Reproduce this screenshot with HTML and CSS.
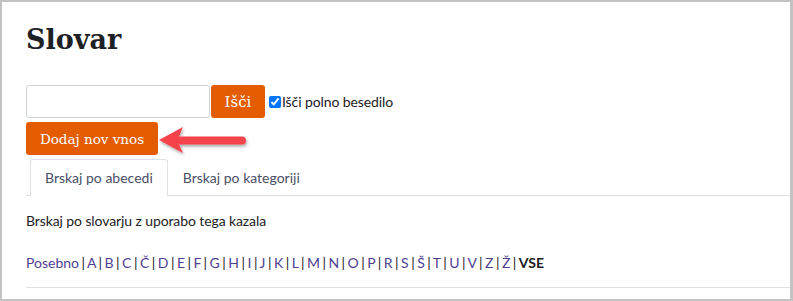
FILE: index.html
```html
<!DOCTYPE html>
<html lang="sl">
<head>
    <meta charset="UTF-8">
    <title>Slovar</title>
    <link rel="stylesheet" href="styles.css">
</head>
<body>
    <div class="frame">
        <h1>Slovar</h1>
        <form class="search-row" onsubmit="return false">
            <input type="text" class="search-input">
            <button type="submit" class="btn btn-search">Išči</button>
            <label class="fulltext"><input type="checkbox" checked>Išči polno besedilo</label>
        </form>
        <div class="add-row">
            <button type="button" class="btn btn-add">Dodaj nov vnos</button>
            <svg class="arrow" width="96" height="36" viewBox="0 0 96 36">
                <defs>
                    <filter id="sh" x="-20%" y="-40%" width="140%" height="180%">
                        <feDropShadow dx="1" dy="2" stdDeviation="1.5" flood-color="#000" flood-opacity="0.35"/>
                    </filter>
                </defs>
                <g filter="url(#sh)" fill="#f6434c">
                    <path d="M1 16 L25 3 L21 12.5 L84 12.5 A4 4 0 0 1 84 20.5 L21 20.5 L25 29 Z"/>
                </g>
            </svg>
        </div>
        <ul class="tabs">
            <li class="active">Brskaj po abecedi</li>
            <li>Brskaj po kategoriji</li>
        </ul>
        <p class="intro">Brskaj po slovarju z uporabo tega kazala</p>
        <div class="letters">
            <a href="#">Posebno</a> | <a href="#">A</a> | <a href="#">B</a> | <a href="#">C</a> | <a href="#">Č</a> | <a href="#">D</a> | <a href="#">E</a> | <a href="#">F</a> | <a href="#">G</a> | <a href="#">H</a> | <a href="#">I</a> | <a href="#">J</a> | <a href="#">K</a> | <a href="#">L</a> | <a href="#">M</a> | <a href="#">N</a> | <a href="#">O</a> | <a href="#">P</a> | <a href="#">R</a> | <a href="#">S</a> | <a href="#">Š</a> | <a href="#">T</a> | <a href="#">U</a> | <a href="#">V</a> | <a href="#">Z</a> | <a href="#">Ž</a> | <b>VSE</b>
        </div>
        <div class="rule"></div>
    </div>
</body>
</html>
```

FILE: styles.css
```css
body {
    margin: 0;
    font-family: "Source Sans Pro", Lato, "Noto Sans", sans-serif;
    font-size: 14px;
    color: #1d2125;
}
.frame {
    width: 793px;
    height: 301px;
    box-sizing: border-box;
    border: 2px solid #c3c3c3;
    border-right-width: 3px;
    padding: 0 0 0 24px;
    background: #fff;
    overflow: hidden;
}
h1 {
    margin: 18px 0 0;
    font-family: "DejaVu Serif", serif;
    font-weight: bold;
    font-size: 27px;
    line-height: 40px;
    color: #1d2125;
}
.search-row {
    display: flex;
    align-items: center;
    margin-top: 25px;
    height: 33px;
}
.search-input {
    width: 184px;
    height: 33px;
    box-sizing: border-box;
    border: 1px solid #ced4da;
    border-radius: 3px;
    margin: 0 1px 0 0;
}
.btn {
    height: 33px;
    border: none;
    border-radius: 3px;
    background: #e35d00;
    color: #fff;
    font-family: "DejaVu Serif", serif;
    font-size: 14px;
    padding: 0 12px;
    cursor: pointer;
}
.btn-search {
    width: 54px;
    padding: 0;
    font-size: 15px;
}
.fulltext {
    display: flex;
    align-items: center;
    margin-left: 4px;
    font-size: 14px;
    letter-spacing: -0.1px;
}
.fulltext input {
    margin: 0 1px 0 0;
    width: 12px;
    height: 12px;
}
.add-row {
    display: flex;
    align-items: center;
    margin-top: 4px;
    height: 33px;
}
.btn-add {
    width: 132px;
    padding: 0;
    font-size: 13.5px;
}
.arrow {
    margin-left: 0;
    margin-top: 7px;
}
.tabs {
    display: flex;
    list-style: none;
    margin: 4px 0 0;
    padding: 0 0 0 4px;
    border-bottom: 1px solid #dee2e6;
    height: 36px;
}
.tabs li {
    padding: 0 14px;
    line-height: 35px;
    color: #4a4e66;
    border: 1px solid transparent;
    border-bottom: none;
    border-radius: 3px 3px 0 0;
}
.tabs li.active {
    border-color: #dee2e6;
    background: #fff;
    height: 36px;
}
.intro {
    margin: 16px 0 0;
    line-height: 18px;
    letter-spacing: -0.1px;
}
.letters {
    margin-top: 24px;
    line-height: 18px;
    color: #1d2125;
    word-spacing: -1.1px;
}
.letters a {
    color: #4f3f93;
    text-decoration: none;
}
.letters b {
    font-weight: bold;
}
.rule {
    margin-top: 15px;
    border-top: 1px solid #dee2e6;
}
```
